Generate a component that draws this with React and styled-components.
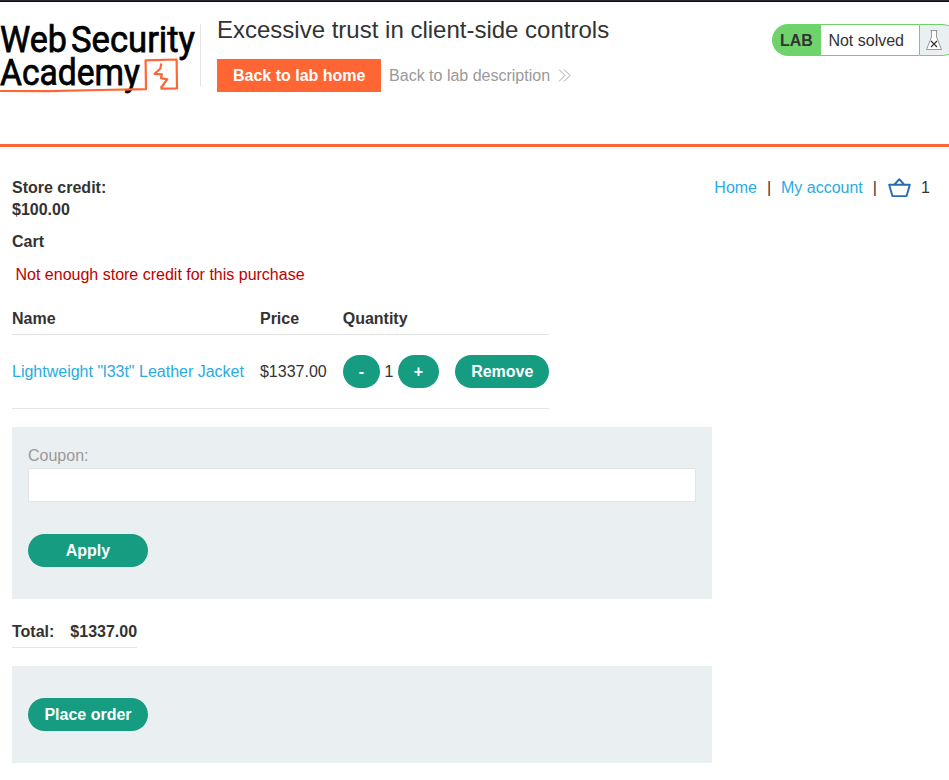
import React from "react";
import styled, { createGlobalStyle } from "styled-components";

const Global = createGlobalStyle`
  *, *::before, *::after { box-sizing: border-box; }
  body {
    margin: 0;
    background: #fff;
    color: #333332;
    font: 16px/22px "Liberation Sans", Arial, sans-serif;
    overflow: hidden;
  }
`;

const Page = styled.div`
  display: flex;
  flex-direction: column;
  height: 780px;
  overflow: hidden;
`;

const TopEdge = styled.div`
  flex: none;
  height: 2px;
  background: #0c0c11;
  border-top: 1px solid #2a2b38;
`;

const Header = styled.header`
  display: flex;
  flex: none;
  height: 145px;
  padding-top: 14px;
  border-bottom: 3px solid #ff6633;
  overflow: hidden;
`;

const Logo = styled.svg`
  flex: none;
  display: block;
  width: 200px;
  height: 92px;
  overflow: visible;
`;

const TitleBlock = styled.div`
  flex: 1;
  display: flex;
  flex-direction: column;
  gap: 15px;
  padding-left: 16px;
`;

const Divider = styled.div`
  flex: none;
  width: 1px;
  height: 62px;
  margin-top: 8px;
  background: #e4e4e4;
`;

const Title = styled.h2`
  margin: 0;
  font-size: 24px;
  font-weight: 400;
  line-height: 28px;
`;

const Actions = styled.div`
  display: flex;
  align-items: center;
  gap: 7.6px;
`;

const HomeButton = styled.a`
  padding: 0 16px;
  line-height: 33px;
  font-weight: 700;
  color: #fff;
  background: #ff6633;
`;

const DescriptionLink = styled.a`
  display: flex;
  align-items: center;
  gap: 8px;
  line-height: 33px;
  color: #999;
`;

const Status = styled.div`
  flex: none;
  display: flex;
  width: 177px;
  height: 32px;
  margin-top: 8px;
  line-height: 32px;
  overflow: hidden;
`;

const StatusLabel = styled.span`
  flex: none;
  width: 49px;
  padding: 1px 0 0 8px;
  font-weight: 700;
  background: #6fd36c;
  border-radius: 16px 0 0 16px;
`;

const StatusText = styled.span`
  flex: none;
  width: 98px;
  padding-left: 7.4px;
  line-height: 31px;
  border: solid #6fd36c;
  border-width: 1px 0;
`;

const StatusIcon = styled.span`
  flex: none;
  display: block;
  width: 40px;
  height: 32px;
  padding: 4px 0 0 5px;
  background: #eaeff2;
  border: 1px solid #6fd36c;
  border-radius: 0 16px 16px 0;
  line-height: 0;
`;

const Main = styled.main`
  display: flex;
  justify-content: space-between;
  align-items: flex-start;
  padding: 30px 19px 0 12px;
`;

const Content = styled.section`
  width: 700px;
`;

const Credit = styled.p`
  margin: 0 0 10px;
  font-weight: 700;
`;

const Heading = styled.h4`
  margin: 0 0 11px;
  font-size: 16px;
  line-height: 22px;
`;

const Warning = styled.p`
  margin: 0 0 22px;
  padding-left: 3.5px;
  color: #c00000;
`;

const Table = styled.table`
  border-collapse: collapse;
  tr { border-bottom: 1px solid #e4e4e4; }
  th, td { padding: 0 16px 0 0; text-align: left; white-space: nowrap; }
  th:last-child, td:last-child { padding-right: 0; }
  th { height: 26px; padding-bottom: 4px; vertical-align: top; }
  td { height: 74px; }
`;

const ItemLink = styled.a`
  color: #29abe2;
`;

const Button = styled.button`
  width: ${(p) => (p.$wide ? "120px" : "auto")};
  height: 33px;
  padding: 0 16px;
  border: 0;
  border-radius: 16.5px;
  background: #169c80;
  color: #fff;
  font: 700 16px/33px "Liberation Sans", Arial, sans-serif;
`;

const Quantity = styled.div`
  display: flex;
  align-items: center;
  gap: 4.45px;
`;

const Panel = styled.form`
  display: flex;
  flex-direction: column;
  align-items: flex-start;
  height: ${(p) => p.$height}px;
  padding: ${(p) => p.$top}px 16px 32px;
  background: #eaeff2;
`;

const Label = styled.label`
  line-height: 22px;
  margin-bottom: 1px;
  color: #999;
`;

const Input = styled.input`
  width: 100%;
  height: 34px;
  margin-bottom: 32px;
  padding: 0 8px;
  border: 1px solid #e4e4e4;
  background: #fff;
`;

const Total = styled.div`
  display: flex;
  gap: 16px;
  width: max-content;
  height: 27px;
  margin: 22px 0 18px;
  font-weight: 700;
  border-bottom: 1px solid #e4e4e4;
`;

const CartLines = styled.div`
  padding-bottom: 18px;
`;

const Nav = styled.nav`
  display: flex;
  align-items: center;
  gap: 9.9px;
  height: 22px;
`;

const NavLink = styled.a`
  color: #29abe2;
`;

const Icon = styled.svg`
  display: block;
  flex: none;
  fill: none;
`;

const BasketIcon = styled(Icon)`
  margin: 0 0.5px 0 1px;
`;

function AcademyLogo() {
  return (
    <Logo viewBox="0 16 200 92" aria-label="Web Security Academy">
      <g
        fill="#000"
        stroke="#000"
        strokeWidth="0.75"
        fontFamily="Roboto, sans-serif"
        fontWeight="400"
        fontSize="37"
      >
        <text x="0" y="52.2" textLength="67" lengthAdjust="spacingAndGlyphs">Web</text>
        <text x="71" y="52.2" textLength="124" lengthAdjust="spacingAndGlyphs">Security</text>
        <text x="0" y="84.8" textLength="140" lengthAdjust="spacingAndGlyphs">Academy</text>
      </g>
      <g fill="none" stroke="#ff6633" strokeWidth="2.2" strokeLinejoin="round">
        <path d="M0 91 L48 91.2 L100 90 L146 89.2 L145.6 60.3 L176.6 59.5 L177 88.4 L160.5 88.6" />
        <path d="M161.3 63.5 L160.4 68.5 L154.6 73.8 L161.8 74.4 L161 78.2 L167.2 79.4 L160.8 88" />
      </g>
    </Logo>
  );
}

export default function App() {
  return (
    <>
      <Global />
      <Page>
        <TopEdge />
        <Header>
          <AcademyLogo />
          <Divider />
          <TitleBlock>
            <Title>Excessive trust in client-side controls</Title>
            <Actions>
              <HomeButton>Back to lab home</HomeButton>
              <DescriptionLink>
                Back to lab description
                <Icon width="13" height="13" viewBox="0 0 13 13" stroke="#999" strokeWidth="0.9">
                  <path d="M1 .5 L7 6.5 L1 12.5 M6 .5 L12 6.5 L6 12.5" />
                </Icon>
              </DescriptionLink>
            </Actions>
          </TitleBlock>
          <Status>
            <StatusLabel>LAB</StatusLabel>
            <StatusText>Not solved</StatusText>
            <StatusIcon>
              <Icon width="18" height="22" viewBox="0 0 18 22" stroke="#999">
                <path d="M6.5 2 V8 L1.5 20.5 H16.5 L11.5 8 V2" fill="#fff" />
                <path d="M5.5 1.5 H12.5" />
                <path d="M6 12 L12 18 M12 12 L6 18" stroke="#333" strokeWidth="1.2" />
              </Icon>
            </StatusIcon>
          </Status>
        </Header>
        <Main>
          <Content>
            <Credit>Store credit:<br />$100.00</Credit>
            <Heading>Cart</Heading>
            <Warning>Not enough store credit for this purchase</Warning>
            <CartLines>
              <Table>
                <tbody>
                  <tr><th>Name</th><th>Price</th><th>Quantity</th><th /></tr>
                  <tr>
                    <td><ItemLink>Lightweight "l33t" Leather Jacket</ItemLink></td>
                    <td>$1337.00</td>
                    <td>
                      <Quantity><Button>-</Button>1<Button>+</Button></Quantity>
                    </td>
                    <td><Button>Remove</Button></td>
                  </tr>
                </tbody>
              </Table>
            </CartLines>
            <Panel $height={172} $top={18}>
              <Label>Coupon:</Label>
              <Input />
              <Button type="button" $wide>Apply</Button>
            </Panel>
            <Total><span>Total:</span><span>$1337.00</span></Total>
            <Panel $height={97} $top={32}>
              <Button type="button" $wide>Place order</Button>
            </Panel>
          </Content>
          <Nav>
            <NavLink>Home</NavLink>
            <span>|</span>
            <NavLink>My account</NavLink>
            <span>|</span>
            <BasketIcon width="23" height="20" viewBox="0 0 23 20" stroke="#286bb4" strokeWidth="1.9" strokeLinejoin="round">
              <path d="M1.2 6.7 H21.8 L18.6 18.1 H4.4 Z M6.5 6.5 L11.3 1.2 L16 6.5" />
            </BasketIcon>
            <span>1</span>
          </Nav>
        </Main>
      </Page>
    </>
  );
}
